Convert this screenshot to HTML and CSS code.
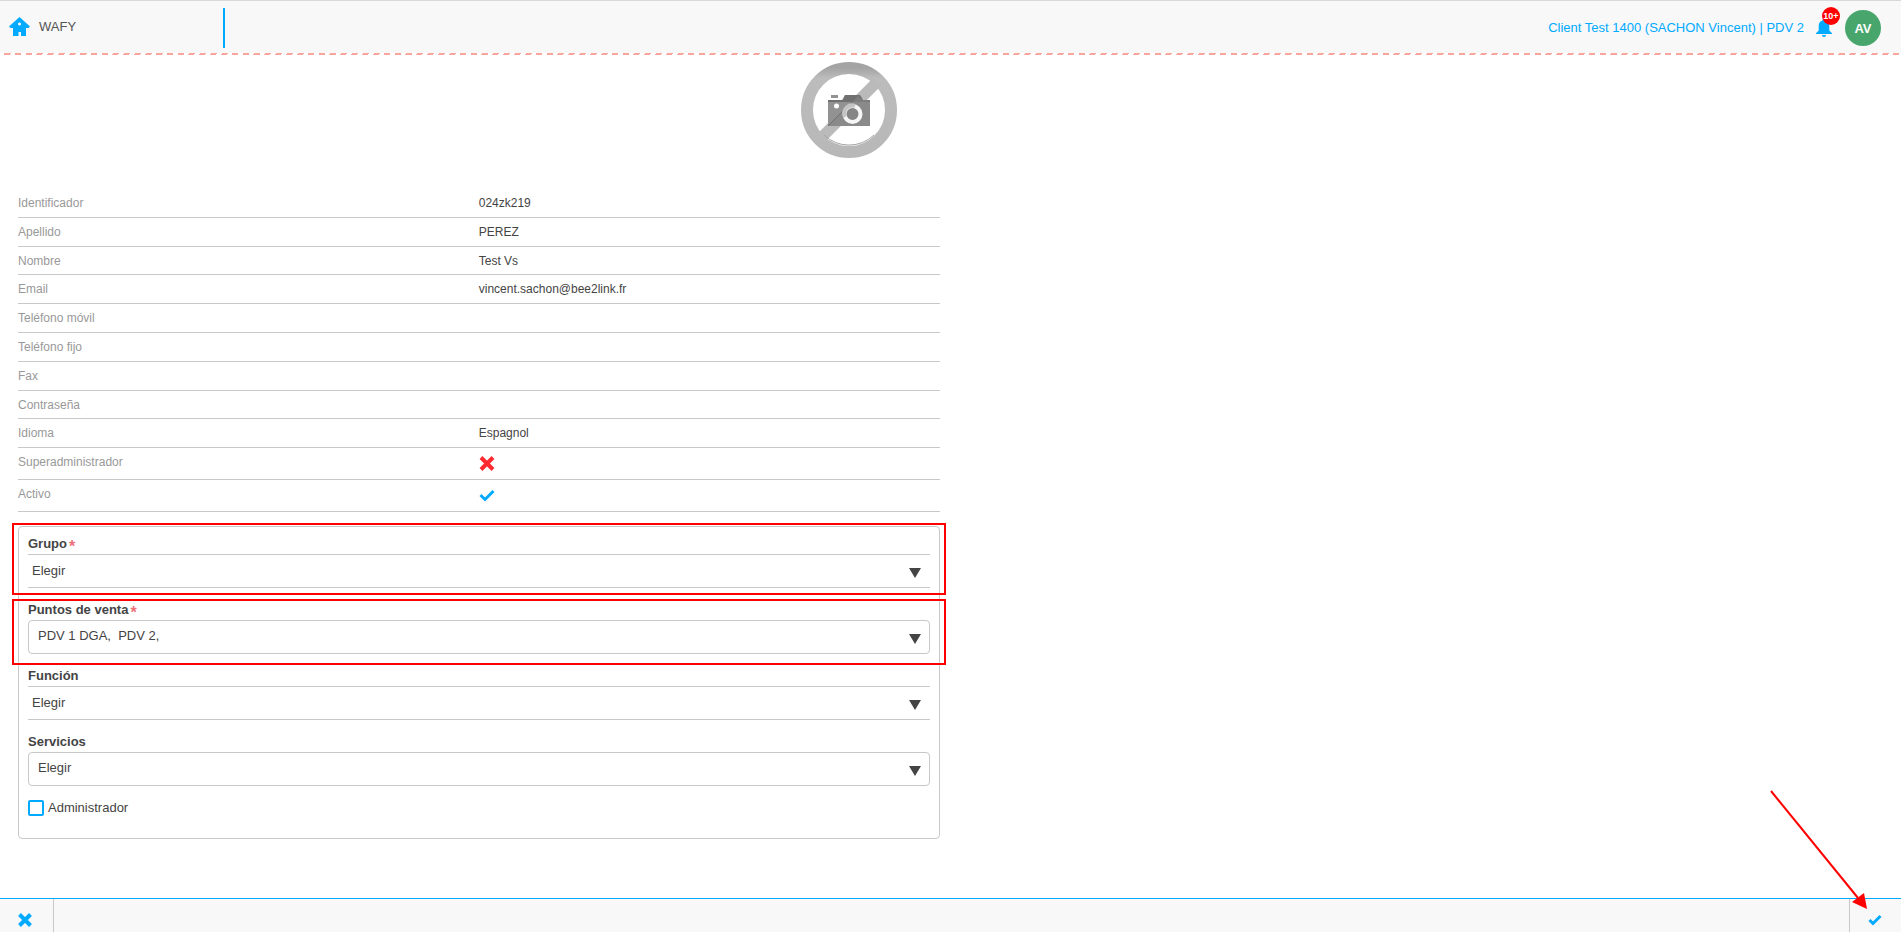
FILE: index.html
```html
<!DOCTYPE html>
<html lang="es">
<head>
<meta charset="utf-8">
<title>WAFY</title>
<link rel="stylesheet" href="styles.css">
</head>
<body>
<header class="topbar">
  <a class="brand" href="#">
    <svg class="home-icon" viewBox="0 0 21 19" aria-hidden="true"><path fill-rule="evenodd" d="M10.500 0 21 9.500 19.500 11H17V19H12V15H9.500V19H4V11H1.500L0 9.500ZM10.500 5.500a1.500 1.500 0 1 0 .01 0Z"/></svg>
    <span>WAFY</span>
  </a>
  <div class="account">
    <a class="client" href="#">Client Test 1400 (SACHON Vincent) | PDV 2</a>
    <button class="bell" type="button" aria-label="Notificaciones">
      <svg viewBox="0 0 16 18" aria-hidden="true"><path d="M8 0c1 0 1.500.6 1.500 1.500C12 2.200 13.300 4 13.300 7v4.500L16 14.200V15H0v-.8l2.700-2.700V7C2.700 4 4 2.200 6.500 1.500 6.500.6 7 0 8 0ZM6 16h4a2 2 0 0 1-4 0Z"/></svg>
      <span class="badge">10+</span>
    </button>
    <button class="avatar" type="button">AV</button>
  </div>
</header>

<main class="content">
  <section class="profile">
    <div class="photo">
      <svg viewBox="0 0 98 98" role="img" aria-label="Sin foto">
        <defs>
          <linearGradient id="ring" x1="0" y1="0" x2="0" y2="1"><stop offset="0" stop-color="#a4a4a4"/><stop offset=".12" stop-color="#bcbcbc"/><stop offset="1" stop-color="#b8b8b8"/></linearGradient>
        </defs>
        <circle cx="49" cy="49" r="42" fill="#fff" stroke="url(#ring)" stroke-width="12"/>
        <path d="M21 77 77 21" stroke="#bababa" stroke-width="11"/>
        <path d="M24 74a36 36 0 0 0 50 0" fill="none" stroke="#a4a4a4" stroke-width="1"/>
        <path d="M31 34h7v3h-7ZM28 39h14l3-5h15l3 5h7v26H28Z" fill="#929292"/>
        <path d="M44 37l1-3h15l3 5h7v2H28v-2h15Z" fill="#707070"/>
        <path d="M28 65 58 35l5 4h7v26Z" fill="#858585" opacity=".6"/>
        <path d="M28 65 56 37" stroke="#707070" stroke-width="1"/>
        <circle cx="36.500" cy="45" r="2.500" fill="#fff"/>
        <circle cx="52.500" cy="53" r="8" fill="#858585" stroke="#f6f6f6" stroke-width="4"/>
        <path d="M45 56a8 8 0 0 1 10-11" fill="none" stroke="#c4c4c4" stroke-width="4"/>
      </svg>
    </div>

    <table class="details">
      <tbody>
        <tr><th scope="row">Identificador</th><td>024zk219</td></tr>
        <tr><th scope="row">Apellido</th><td>PEREZ</td></tr>
        <tr><th scope="row">Nombre</th><td>Test Vs</td></tr>
        <tr><th scope="row">Email</th><td>vincent.sachon@bee2link.fr</td></tr>
        <tr><th scope="row">Teléfono móvil</th><td></td></tr>
        <tr><th scope="row">Teléfono fijo</th><td></td></tr>
        <tr><th scope="row">Fax</th><td></td></tr>
        <tr><th scope="row">Contraseña</th><td></td></tr>
        <tr><th scope="row">Idioma</th><td>Espagnol</td></tr>
        <tr><th scope="row">Superadministrador</th><td><svg class="mark no" viewBox="0 0 16 20" role="img" aria-label="No"><path d="M2 3.500 14 15.500M14 3.500 2 15.500"/></svg></td></tr>
        <tr><th scope="row">Activo</th><td><svg class="mark yes" viewBox="0 0 16 20" role="img" aria-label="Sí"><path d="M1.500 9 6 13.500 14.500 5"/></svg></td></tr>
      </tbody>
    </table>

    <form class="panel">
      <div class="field marked">
        <label for="grupo">Grupo<span class="req">*</span></label>
        <div class="control plain">
          <select id="grupo"><option>Elegir</option></select>
          <svg class="caret" viewBox="0 0 12 10" aria-hidden="true"><path d="M0 0h12L6 10Z"/></svg>
        </div>
      </div>
      <div class="field marked lower">
        <label for="puntos">Puntos de venta<span class="req">*</span></label>
        <div class="control boxed">
          <select id="puntos"><option>PDV 1 DGA,&nbsp; PDV 2,</option></select>
          <svg class="caret" viewBox="0 0 12 10" aria-hidden="true"><path d="M0 0h12L6 10Z"/></svg>
        </div>
      </div>
      <div class="field">
        <label for="funcion">Función</label>
        <div class="control plain">
          <select id="funcion"><option>Elegir</option></select>
          <svg class="caret" viewBox="0 0 12 10" aria-hidden="true"><path d="M0 0h12L6 10Z"/></svg>
        </div>
      </div>
      <div class="field">
        <label for="servicios">Servicios</label>
        <div class="control boxed">
          <select id="servicios"><option>Elegir</option></select>
          <svg class="caret" viewBox="0 0 12 10" aria-hidden="true"><path d="M0 0h12L6 10Z"/></svg>
        </div>
      </div>
      <div class="check">
        <input type="checkbox" id="admin">
        <label for="admin">Administrador</label>
      </div>
    </form>
  </section>
</main>

<footer class="actions">
  <button class="action cancel" type="button" aria-label="Cancelar"><svg viewBox="0 0 14 14" aria-hidden="true"><path d="M1.500 1.500 12.500 12.500M12.500 1.500 1.500 12.500"/></svg></button>
  <button class="action accept" type="button" aria-label="Aceptar"><svg viewBox="0 0 14 14" aria-hidden="true"><path d="M1.500 7 5 10.500 12.500 3"/></svg></button>
</footer>

<svg class="pointer" viewBox="0 0 98 120" aria-hidden="true"><path d="M1 1 88 108" stroke="#f00" stroke-width="2"/><path d="M97 119 82 112 94 103Z" fill="#f00"/></svg>
</body>
</html>
```
FILE: styles.css
```css
* {
  box-sizing: border-box;
}

body {
  margin: 0;
  height: 100vh;
  display: flex;
  flex-direction: column;
  overflow: hidden;
  background: #fff;
  color: #444;
  font: 13px "Liberation Sans", Arial, sans-serif;
}

button,
select {
  font: inherit;
  color: inherit;
  border: 0;
  padding: 0;
  background: none;
}

a {
  text-decoration: none;
}

/* Top bar */
.topbar {
  position: relative;
  flex: none;
  display: flex;
  justify-content: space-between;
  height: 55px;
  padding: 7px 20px 7px 9px;
  border-top: 1px solid #d8d8dc;
  background: #f8f8f8;
}

.topbar::after {
  content: "";
  position: absolute;
  left: 0;
  right: 0;
  bottom: 0;
  height: 2px;
  background: repeating-linear-gradient(124deg, #fff 0 4px, #f7a59d 4px 9px);
}

.brand {
  display: flex;
  align-items: center;
  gap: 9px;
  width: 216px;
  height: 40px;
  padding-bottom: 3px;
  border-right: 2px solid #0af;
  color: #555;
}

.home-icon {
  width: 21px;
  height: 19px;
  fill: #0af;
}

.account {
  display: flex;
  align-items: center;
  height: 40px;
}

.client {
  color: #0af;
  margin-right: 12px;
  padding-bottom: 2px;
}

.bell {
  position: relative;
  width: 16px;
  height: 18px;
  margin-right: 13px;
}

.bell svg {
  display: block;
  fill: #0af;
}

.badge {
  position: absolute;
  left: 6px;
  top: -12px;
  width: 18px;
  height: 18px;
  border-radius: 50%;
  background: #f00;
  color: #fff;
  font-size: 9px;
  font-weight: bold;
  line-height: 18px;
  text-align: center;
}

.avatar {
  width: 36px;
  height: 36px;
  border-radius: 50%;
  background: #48a66c;
  color: #fff;
  font-weight: bold;
}

/* Profile */
.content {
  flex: 1;
  min-height: 0;
  overflow: hidden;
  display: grid;
  grid-template-columns: 1fr 1fr;
  align-items: start;
}

.profile {
  padding: 6px 11px 0 18px;
}

.photo {
  display: flex;
  justify-content: flex-end;
  height: 128px;
  padding-right: 42px;
}

.photo svg {
  width: 98px;
  height: 98px;
}

.details {
  width: 100%;
  border-spacing: 0;
  table-layout: fixed;
  font-size: 12px;
  line-height: 1.4;
}

.details th,
.details td {
  padding: 6px 0 5px;
  border-bottom: 1px solid #c8c8c8;
  text-align: left;
  vertical-align: top;
  font-weight: normal;
}

.details th {
  color: #999;
}

.mark {
  display: block;
  width: 16px;
  height: 20px;
  fill: none;
  stroke-width: 4;
}

.no {
  stroke: #ff2a2f;
}

.yes {
  stroke: #0af;
  stroke-width: 3;
}

/* Assignment form */
.panel {
  margin-top: 14px;
  padding: 7px 9px 22px;
  border: 1px solid #c8c8c8;
  border-radius: 4px;
}

.field {
  position: relative;
  margin-bottom: 12px;
}

.field label {
  display: block;
  line-height: 20px;
  font-weight: bold;
}

.req {
  margin-left: 2px;
  color: #f07078;
  font-size: 16px;
  line-height: 0;
  vertical-align: -4px;
}

.marked::after {
  content: "";
  position: absolute;
  inset: -11px -16px -7px;
  border: 2px solid #f00;
  pointer-events: none;
}

.lower::after {
  top: -1px;
  bottom: -11px;
}

.control {
  position: relative;
  height: 34px;
  border: solid #c8c8c8;
}

.plain {
  border-width: 1px 0;
}

.boxed {
  border-width: 1px;
  border-radius: 4px;
}

.control select {
  display: block;
  width: 100%;
  height: 100%;
  padding: 0 0 1px 4px;
  appearance: none;
}

.boxed select {
  padding: 0 0 3px 9px;
}

.caret {
  position: absolute;
  right: 9px;
  top: 13px;
  width: 12px;
  height: 10px;
  fill: #444;
}

.boxed .caret {
  right: 8px;
}

.check {
  display: flex;
  align-items: flex-start;
  gap: 4px;
  padding-top: 2px;
}

.check input {
  appearance: none;
  width: 16px;
  height: 16px;
  margin: 0;
  border: 2px solid #0af;
  border-radius: 2px;
}

.check input:checked {
  background: #0af;
}

/* Bottom actions */
.actions {
  flex: none;
  display: flex;
  justify-content: space-between;
  height: 34px;
  border-top: 1px solid #0af;
  background: #f8f8f8;
}

.action {
  display: flex;
  justify-content: center;
  padding-top: 14px;
}

.action svg {
  width: 14px;
  height: 14px;
  fill: none;
  stroke: #0af;
  stroke-width: 4;
}

.cancel {
  width: 54px;
  padding-right: 3px;
  border-right: 1px solid #c8c8c8;
}

.accept {
  width: 52px;
  padding-right: 2px;
  border-left: 1px solid #c8c8c8;
}

.accept svg {
  stroke-width: 3;
}

.pointer {
  position: absolute;
  right: 33px;
  bottom: 22px;
  width: 98px;
  height: 120px;
  fill: none;
  pointer-events: none;
}
```
